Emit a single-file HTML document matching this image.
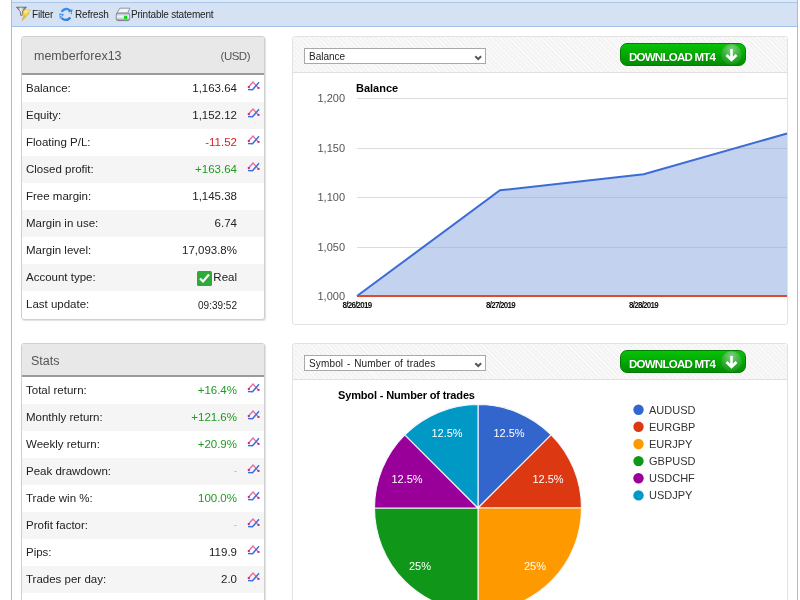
<!DOCTYPE html>
<html><head><meta charset="utf-8">
<style>
*{margin:0;padding:0;box-sizing:border-box}
html,body{width:800px;height:600px;overflow:hidden;background:#fff;font-family:"Liberation Sans",sans-serif}
body{will-change:transform}
.abs{position:absolute}
#outer{position:absolute;left:11px;top:-1px;width:787px;height:610px;border-left:1px solid #9ebfe9;border-right:1px solid #9ebfe9;background:#fff}
#topstrip{position:absolute;left:12px;top:0;width:785px;height:3px;background:#dfe9f6;border-bottom:1px solid #a9c6ec}
#toolbar{position:absolute;left:12px;top:3px;width:785px;height:24px;background:#d5e2f3;border-bottom:1px solid #a3c1ea}
.tb{position:absolute;top:6px;font-size:10px;color:#222;letter-spacing:-0.2px}
.panel{position:absolute;background:#fff;border:1px solid #cfcfcf;border-radius:3px;box-shadow:1px 1px 1px rgba(0,0,0,0.12)}
.phead{position:absolute;left:0;top:0;right:0;background:#e8e8e8;border-bottom:2px solid #9a9a9a;border-radius:3px 3px 0 0;color:#555;font-size:12.5px}
.row{position:absolute;left:0;right:0;height:27px;font-size:11.5px;color:#222}
.row.alt{background:#f5f5f5}
.row .l{position:absolute;left:4px;top:7px}
.row .v{position:absolute;right:27px;top:7px;text-align:right}
.g{color:#1f9a1f}.r{color:#dd2222}
.ico{position:absolute;right:3px;top:5.25px;width:14px;height:12px}
.cpanel{position:absolute;background:#fff;border:1px solid #e2e2e2;border-radius:3px}
.chead{position:absolute;left:0;top:0;right:0;height:36px;border-bottom:1px solid #e0e0e0;border-radius:3px 3px 0 0;
background:repeating-linear-gradient(45deg,#f9f9f9 0px,#f9f9f9 1.8px,#f2f2f2 1.8px,#f2f2f2 3.2px)}
.sel{position:absolute;left:11px;top:11px;width:182px;height:16px;border:1px solid #a9a9a9;background:#fff;font-size:10px;color:#222;padding-left:4px;line-height:15px}
.sel svg{position:absolute;left:0;top:0}
.dl{position:absolute;left:327px;top:6px;width:126px;height:23px;border-radius:7px;background:linear-gradient(#06c406,#03a803 50%,#028c02);border:1px solid #067a06}
.dl span{position:absolute;left:8px;top:6.5px;font-size:11.5px;font-weight:bold;color:#fff;letter-spacing:-0.75px;text-shadow:0 0 1px rgba(0,0,0,.3)}
.dl i{position:absolute;left:100px;top:0px;width:21px;height:21px;border-radius:50%;background:radial-gradient(circle at 50% 25%,#7fd27f,#3ab33a 45%,#119811 80%)}
.dl i svg{position:absolute;left:0;top:0}
.ylab{position:absolute;font-size:11px;color:#444;text-align:right;width:40px}
.xlab{position:absolute;font-size:8px;color:#222;letter-spacing:-0.75px;font-weight:normal}
</style></head><body>
<div id="outer"></div>
<div id="topstrip"></div>
<div id="toolbar">
  <svg class="abs" style="left:0;top:0" width="200" height="24" viewBox="12 3 200 24">
    <defs>
      <linearGradient id="fun" x1="0" y1="0" x2="1" y2="0"><stop offset="0" stop-color="#6a6a6a"/><stop offset="0.45" stop-color="#f4f4f4"/><stop offset="1" stop-color="#555"/></linearGradient>
      <linearGradient id="bolt" x1="0" y1="0" x2="0" y2="1"><stop offset="0" stop-color="#fff7b0"/><stop offset="0.5" stop-color="#f3d23a"/><stop offset="1" stop-color="#e0a000"/></linearGradient>
      <linearGradient id="prn" x1="0" y1="0" x2="0" y2="1"><stop offset="0" stop-color="#aab4c4"/><stop offset="0.45" stop-color="#f4f5f8"/><stop offset="0.8" stop-color="#c8ccd8"/><stop offset="1" stop-color="#5d6778"/></linearGradient>
    </defs>
    <path d="M16.5 7.2 L26.3 7.2 L22.5 11.5 L22.2 15.3 L20.6 15.3 L20.3 11.5 Z" fill="url(#fun)" stroke="#555" stroke-width="0.7"/>
    <path d="M24.2 10 L30.6 10 L27.4 13.4 L29.2 13.4 L22 20.5 L24.3 15 L22.6 15 Z" fill="url(#bolt)" stroke="#d49a10" stroke-width="0.5"/>
    <path d="M61.5 11.8 Q65.5 6.8 70.2 10.6" fill="none" stroke="#3a8ee8" stroke-width="2.3"/>
    <path d="M67.6 10.8 L72.6 9.2 L71.6 14.6 Z" fill="#3a8ee8"/>
    <path d="M70.4 17.6 Q66 22 61.4 18" fill="none" stroke="#2f80e0" stroke-width="2.3"/>
    <path d="M59.4 13.2 L64.2 14.6 L59.8 18.8 Z" fill="#3a8ee8"/>
    <circle cx="70.4" cy="12.6" r="0.9" fill="#c8e8ff"/>
    <circle cx="61.2" cy="15.6" r="0.9" fill="#c8e8ff"/>
    <path d="M119.8 8.2 L129.8 8.2 L127.6 13.4 L116.8 13.4 Z" fill="#f4f4f8" stroke="#7a8494" stroke-width="0.8"/>
    <rect x="116.2" y="13" width="13.5" height="7.6" rx="2" fill="url(#prn)" stroke="#6d7684" stroke-width="0.8"/>
    <rect x="124" y="15.8" width="3.2" height="3.2" fill="#16d916"/>
  </svg>
  <div class="tb" style="left:20px">Filter</div>
  <div class="tb" style="left:63px">Refresh</div>
  <div class="tb" style="left:119px">Printable statement</div>
</div>

<!-- account panel -->
<div class="panel" style="left:21px;top:36px;width:244px;height:284px">
  <div class="phead" style="height:38px">
    <span class="abs" style="left:12px;top:12px">memberforex13</span>
    <span class="abs" style="right:14px;top:13px;letter-spacing:-0.5px;font-size:11.5px">(USD)</span>
  </div>
<div class="row" style="top:38px"><span class="l">Balance:</span><span class="v ">1,163.64</span><svg class="ico" viewBox="0 0 14 12"><polyline points="1.5,7 6,2 11.5,8" fill="none" stroke="#e66aa6" stroke-width="1.3"/><rect x="0.8" y="6" width="2" height="2" fill="#c8307a"/><rect x="10.5" y="7" width="2" height="2" fill="#c8307a"/><polyline points="1,9.5 5.5,9.8 12,2.3" fill="none" stroke="#3d6ee0" stroke-width="1.5"/></svg></div>
<div class="row alt" style="top:65px"><span class="l">Equity:</span><span class="v ">1,152.12</span><svg class="ico" viewBox="0 0 14 12"><polyline points="1.5,7 6,2 11.5,8" fill="none" stroke="#e66aa6" stroke-width="1.3"/><rect x="0.8" y="6" width="2" height="2" fill="#c8307a"/><rect x="10.5" y="7" width="2" height="2" fill="#c8307a"/><polyline points="1,9.5 5.5,9.8 12,2.3" fill="none" stroke="#3d6ee0" stroke-width="1.5"/></svg></div>
<div class="row" style="top:92px"><span class="l">Floating P/L:</span><span class="v r">-11.52</span><svg class="ico" viewBox="0 0 14 12"><polyline points="1.5,7 6,2 11.5,8" fill="none" stroke="#e66aa6" stroke-width="1.3"/><rect x="0.8" y="6" width="2" height="2" fill="#c8307a"/><rect x="10.5" y="7" width="2" height="2" fill="#c8307a"/><polyline points="1,9.5 5.5,9.8 12,2.3" fill="none" stroke="#3d6ee0" stroke-width="1.5"/></svg></div>
<div class="row alt" style="top:119px"><span class="l">Closed profit:</span><span class="v g">+163.64</span><svg class="ico" viewBox="0 0 14 12"><polyline points="1.5,7 6,2 11.5,8" fill="none" stroke="#e66aa6" stroke-width="1.3"/><rect x="0.8" y="6" width="2" height="2" fill="#c8307a"/><rect x="10.5" y="7" width="2" height="2" fill="#c8307a"/><polyline points="1,9.5 5.5,9.8 12,2.3" fill="none" stroke="#3d6ee0" stroke-width="1.5"/></svg></div>
<div class="row" style="top:146px"><span class="l">Free margin:</span><span class="v ">1,145.38</span></div>
<div class="row alt" style="top:173px"><span class="l">Margin in use:</span><span class="v ">6.74</span></div>
<div class="row" style="top:200px"><span class="l">Margin level:</span><span class="v ">17,093.8%</span></div>
<div class="row alt" style="top:227px"><span class="l">Account type:</span><svg class="abs" style="right:52px;top:7px" width="15" height="15" viewBox="0 0 15 15"><rect x="0" y="0" width="15" height="15" rx="1.5" fill="#2eaa3a"/><polyline points="3,7.5 6,10.5 12,3.5" fill="none" stroke="#fff" stroke-width="2.2"/></svg><span class="v">Real</span></div>
<div class="row" style="top:254px"><span class="l">Last update:</span><span class="v" style="font-size:10px;top:9px">09:39:52</span></div>
</div>

<!-- stats panel -->
<div class="panel" style="left:21px;top:343px;width:244px;height:270px">
  <div class="phead" style="height:33px">
    <span class="abs" style="left:9px;top:10px">Stats</span>
  </div>
<div class="row" style="top:33px"><span class="l">Total return:</span><span class="v g">+16.4%</span><svg class="ico" viewBox="0 0 14 12"><polyline points="1.5,7 6,2 11.5,8" fill="none" stroke="#e66aa6" stroke-width="1.3"/><rect x="0.8" y="6" width="2" height="2" fill="#c8307a"/><rect x="10.5" y="7" width="2" height="2" fill="#c8307a"/><polyline points="1,9.5 5.5,9.8 12,2.3" fill="none" stroke="#3d6ee0" stroke-width="1.5"/></svg></div>
<div class="row alt" style="top:60px"><span class="l">Monthly return:</span><span class="v g">+121.6%</span><svg class="ico" viewBox="0 0 14 12"><polyline points="1.5,7 6,2 11.5,8" fill="none" stroke="#e66aa6" stroke-width="1.3"/><rect x="0.8" y="6" width="2" height="2" fill="#c8307a"/><rect x="10.5" y="7" width="2" height="2" fill="#c8307a"/><polyline points="1,9.5 5.5,9.8 12,2.3" fill="none" stroke="#3d6ee0" stroke-width="1.5"/></svg></div>
<div class="row" style="top:87px"><span class="l">Weekly return:</span><span class="v g">+20.9%</span><svg class="ico" viewBox="0 0 14 12"><polyline points="1.5,7 6,2 11.5,8" fill="none" stroke="#e66aa6" stroke-width="1.3"/><rect x="0.8" y="6" width="2" height="2" fill="#c8307a"/><rect x="10.5" y="7" width="2" height="2" fill="#c8307a"/><polyline points="1,9.5 5.5,9.8 12,2.3" fill="none" stroke="#3d6ee0" stroke-width="1.5"/></svg></div>
<div class="row alt" style="top:114px"><span class="l">Peak drawdown:</span><span class="v" style="color:#aaa;font-size:9px;top:8px">-</span><svg class="ico" viewBox="0 0 14 12"><polyline points="1.5,7 6,2 11.5,8" fill="none" stroke="#e66aa6" stroke-width="1.3"/><rect x="0.8" y="6" width="2" height="2" fill="#c8307a"/><rect x="10.5" y="7" width="2" height="2" fill="#c8307a"/><polyline points="1,9.5 5.5,9.8 12,2.3" fill="none" stroke="#3d6ee0" stroke-width="1.5"/></svg></div>
<div class="row" style="top:141px"><span class="l">Trade win %:</span><span class="v g">100.0%</span><svg class="ico" viewBox="0 0 14 12"><polyline points="1.5,7 6,2 11.5,8" fill="none" stroke="#e66aa6" stroke-width="1.3"/><rect x="0.8" y="6" width="2" height="2" fill="#c8307a"/><rect x="10.5" y="7" width="2" height="2" fill="#c8307a"/><polyline points="1,9.5 5.5,9.8 12,2.3" fill="none" stroke="#3d6ee0" stroke-width="1.5"/></svg></div>
<div class="row alt" style="top:168px"><span class="l">Profit factor:</span><span class="v" style="color:#aaa;font-size:9px;top:8px">-</span><svg class="ico" viewBox="0 0 14 12"><polyline points="1.5,7 6,2 11.5,8" fill="none" stroke="#e66aa6" stroke-width="1.3"/><rect x="0.8" y="6" width="2" height="2" fill="#c8307a"/><rect x="10.5" y="7" width="2" height="2" fill="#c8307a"/><polyline points="1,9.5 5.5,9.8 12,2.3" fill="none" stroke="#3d6ee0" stroke-width="1.5"/></svg></div>
<div class="row" style="top:195px"><span class="l">Pips:</span><span class="v ">119.9</span><svg class="ico" viewBox="0 0 14 12"><polyline points="1.5,7 6,2 11.5,8" fill="none" stroke="#e66aa6" stroke-width="1.3"/><rect x="0.8" y="6" width="2" height="2" fill="#c8307a"/><rect x="10.5" y="7" width="2" height="2" fill="#c8307a"/><polyline points="1,9.5 5.5,9.8 12,2.3" fill="none" stroke="#3d6ee0" stroke-width="1.5"/></svg></div>
<div class="row alt" style="top:222px"><span class="l">Trades per day:</span><span class="v ">2.0</span><svg class="ico" viewBox="0 0 14 12"><polyline points="1.5,7 6,2 11.5,8" fill="none" stroke="#e66aa6" stroke-width="1.3"/><rect x="0.8" y="6" width="2" height="2" fill="#c8307a"/><rect x="10.5" y="7" width="2" height="2" fill="#c8307a"/><polyline points="1,9.5 5.5,9.8 12,2.3" fill="none" stroke="#3d6ee0" stroke-width="1.5"/></svg></div>
<div class="row" style="top:249px"><span class="l"></span><span class="v "></span></div>
</div>

<!-- balance chart panel -->
<div class="cpanel" style="left:292px;top:36px;width:496px;height:289px">
  <div class="chead">
    <div class="sel">Balance<svg width="180" height="14" viewBox="0 0 180 14"><path d="M170.3 7.2 L173.2 10.1 L176.1 7.2" fill="none" stroke="#555" stroke-width="2"/></svg></div>
    <div class="dl"><span>DOWNLOAD MT4</span><i><svg width="21" height="21" viewBox="0 0 21 21"><path d="M10.5 5 L10.5 15.5 M5.5 11 L10.5 16 L15.5 11" fill="none" stroke="#fff" stroke-width="2.6" stroke-linecap="butt" stroke-linejoin="miter"/></svg></i></div>
  </div>
</div>

<!-- pie chart panel -->
<div class="cpanel" style="left:292px;top:343px;width:496px;height:270px">
  <div class="chead">
    <div class="sel" style="word-spacing:0.8px;letter-spacing:0.15px">Symbol - Number of trades<svg width="180" height="14" viewBox="0 0 180 14"><path d="M170.3 7.2 L173.2 10.1 L176.1 7.2" fill="none" stroke="#555" stroke-width="2"/></svg></div>
    <div class="dl"><span>DOWNLOAD MT4</span><i><svg width="21" height="21" viewBox="0 0 21 21"><path d="M10.5 5 L10.5 15.5 M5.5 11 L10.5 16 L15.5 11" fill="none" stroke="#fff" stroke-width="2.6" stroke-linecap="butt" stroke-linejoin="miter"/></svg></i></div>
  </div>
</div>

<svg class="abs" style="left:0;top:0" width="800" height="600" viewBox="0 0 800 600">
<line x1="357" y1="98.5" x2="787" y2="98.5" stroke="#dcdcdc" stroke-width="1"/>
<line x1="357" y1="148.5" x2="787" y2="148.5" stroke="#dcdcdc" stroke-width="1"/>
<line x1="357" y1="197.5" x2="787" y2="197.5" stroke="#dcdcdc" stroke-width="1"/>
<line x1="357" y1="247.5" x2="787" y2="247.5" stroke="#dcdcdc" stroke-width="1"/>
<defs><clipPath id="ar"><polygon points="357,296 500,190.3 643.7,174.3 787,133.5 787,296"/></clipPath></defs><polygon points="357,296 500,190.3 643.7,174.3 787,133.5 787,296" fill="#c3d2ef"/>
<line x1="357" y1="148.5" x2="787" y2="148.5" stroke="#aab6cc" stroke-opacity="0.6" stroke-width="1" clip-path="url(#ar)"/>
<line x1="357" y1="197.5" x2="787" y2="197.5" stroke="#aab6cc" stroke-opacity="0.6" stroke-width="1" clip-path="url(#ar)"/>
<line x1="357" y1="247.5" x2="787" y2="247.5" stroke="#aab6cc" stroke-opacity="0.6" stroke-width="1" clip-path="url(#ar)"/>
<polyline points="357,296 500,190.3 643.7,174.3 787,133.5" fill="none" stroke="#3b6cd6" stroke-width="2"/>
<line x1="357" y1="296" x2="787" y2="296" stroke="#dd4b2a" stroke-width="2"/>
<text x="345" y="102" text-anchor="end" font-size="11" fill="#555">1,200</text>
<text x="345" y="152" text-anchor="end" font-size="11" fill="#555">1,150</text>
<text x="345" y="201" text-anchor="end" font-size="11" fill="#555">1,100</text>
<text x="345" y="251" text-anchor="end" font-size="11" fill="#555">1,050</text>
<text x="345" y="300" text-anchor="end" font-size="11" fill="#555">1,000</text>
<text x="357" y="308" text-anchor="middle" font-size="8.6" fill="#111" letter-spacing="-0.8" font-weight="bold" transform="translate(357 0) scale(0.93 1) translate(-357 0)">8/26/2019</text>
<text x="500.5" y="308" text-anchor="middle" font-size="8.6" fill="#111" letter-spacing="-0.8" font-weight="bold" transform="translate(500.5 0) scale(0.93 1) translate(-500.5 0)">8/27/2019</text>
<text x="643.5" y="308" text-anchor="middle" font-size="8.6" fill="#111" letter-spacing="-0.8" font-weight="bold" transform="translate(643.5 0) scale(0.93 1) translate(-643.5 0)">8/28/2019</text>
<text x="356" y="92" font-size="11" font-weight="bold" fill="#000">Balance</text>
<path d="M478,508 L478.00,404.50 A103.5,103.5 0 0 1 551.19,434.81 Z" fill="#3366cc" stroke="#f4f6fb" stroke-width="1.1"/>
<path d="M478,508 L551.19,434.81 A103.5,103.5 0 0 1 581.50,508.00 Z" fill="#dc3912" stroke="#f4f6fb" stroke-width="1.1"/>
<path d="M478,508 L581.50,508.00 A103.5,103.5 0 0 1 478.00,611.50 Z" fill="#ff9900" stroke="#f4f6fb" stroke-width="1.1"/>
<path d="M478,508 L478.00,611.50 A103.5,103.5 0 0 1 374.50,508.00 Z" fill="#109618" stroke="#f4f6fb" stroke-width="1.1"/>
<path d="M478,508 L374.50,508.00 A103.5,103.5 0 0 1 404.81,434.81 Z" fill="#990099" stroke="#f4f6fb" stroke-width="1.1"/>
<path d="M478,508 L404.81,434.81 A103.5,103.5 0 0 1 478.00,404.50 Z" fill="#0099c6" stroke="#f4f6fb" stroke-width="1.1"/>
<text x="509" y="437" text-anchor="middle" font-size="11" fill="#fff">12.5%</text>
<text x="548" y="483" text-anchor="middle" font-size="11" fill="#fff">12.5%</text>
<text x="535" y="570" text-anchor="middle" font-size="11" fill="#fff">25%</text>
<text x="420" y="570" text-anchor="middle" font-size="11" fill="#fff">25%</text>
<text x="407" y="483" text-anchor="middle" font-size="11" fill="#fff">12.5%</text>
<text x="447" y="437" text-anchor="middle" font-size="11" fill="#fff">12.5%</text>
<text x="338" y="399" font-size="11" font-weight="bold" fill="#000" letter-spacing="-0.15">Symbol - Number of trades</text>
<circle cx="638.5" cy="409.7" r="5.2" fill="#3366cc"/>
<text x="649" y="413.7" font-size="11" fill="#333">AUDUSD</text>
<circle cx="638.5" cy="426.8" r="5.2" fill="#dc3912"/>
<text x="649" y="430.8" font-size="11" fill="#333">EURGBP</text>
<circle cx="638.5" cy="444.0" r="5.2" fill="#ff9900"/>
<text x="649" y="448.0" font-size="11" fill="#333">EURJPY</text>
<circle cx="638.5" cy="461.1" r="5.2" fill="#109618"/>
<text x="649" y="465.1" font-size="11" fill="#333">GBPUSD</text>
<circle cx="638.5" cy="478.3" r="5.2" fill="#990099"/>
<text x="649" y="482.3" font-size="11" fill="#333">USDCHF</text>
<circle cx="638.5" cy="495.4" r="5.2" fill="#0099c6"/>
<text x="649" y="499.4" font-size="11" fill="#333">USDJPY</text>
</svg>
</body></html>
